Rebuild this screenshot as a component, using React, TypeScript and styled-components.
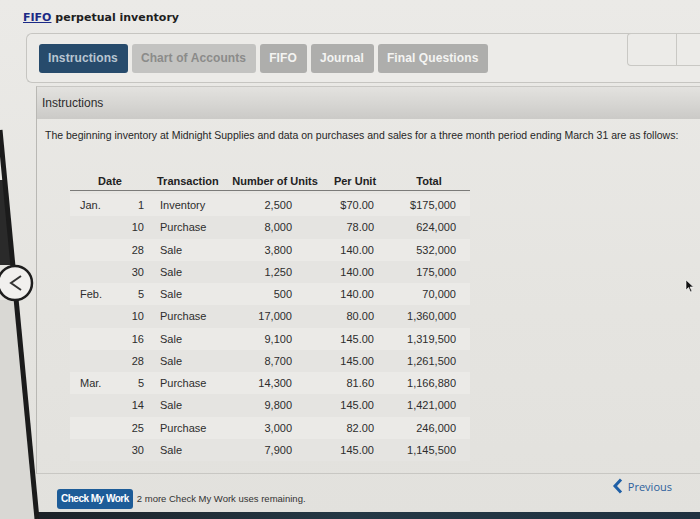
import React from "react";
import styled, { createGlobalStyle } from "styled-components";

const GlobalStyle = createGlobalStyle`
  html, body {
    margin: 0;
    padding: 0;
    background: #e6e5e1;
  }
  body {
    font-family: "Liberation Sans", Arial, sans-serif;
    color: #2a2a2a;
  }
`;

interface Row {
  month?: string;
  day: string;
  kind: string;
  units: string;
  per: string;
  total: string;
}

const rows: Row[] = [
  { month: "Jan.", day: "1", kind: "Inventory", units: "2,500", per: "$70.00", total: "$175,000" },
  { day: "10", kind: "Purchase", units: "8,000", per: "78.00", total: "624,000" },
  { day: "28", kind: "Sale", units: "3,800", per: "140.00", total: "532,000" },
  { day: "30", kind: "Sale", units: "1,250", per: "140.00", total: "175,000" },
  { month: "Feb.", day: "5", kind: "Sale", units: "500", per: "140.00", total: "70,000" },
  { day: "10", kind: "Purchase", units: "17,000", per: "80.00", total: "1,360,000" },
  { day: "16", kind: "Sale", units: "9,100", per: "145.00", total: "1,319,500" },
  { day: "28", kind: "Sale", units: "8,700", per: "145.00", total: "1,261,500" },
  { month: "Mar.", day: "5", kind: "Purchase", units: "14,300", per: "81.60", total: "1,166,880" },
  { day: "14", kind: "Sale", units: "9,800", per: "145.00", total: "1,421,000" },
  { day: "25", kind: "Purchase", units: "3,000", per: "82.00", total: "246,000" },
  { day: "30", kind: "Sale", units: "7,900", per: "145.00", total: "1,145,500" },
];

const tabs = ["Instructions", "Chart of Accounts", "FIFO", "Journal", "Final Questions"];

const Screen = styled.div`
  position: relative;
  width: 700px;
  height: 519px;
  overflow: hidden;
  display: flex;
  flex-direction: column;
  background: linear-gradient(180deg, #ebeae7 0%, #e5e4e0 60%, #e2e1dd 100%);
`;

const Title = styled.h1`
  margin: 0;
  padding: 10px 0 0 23px;
  height: 22px;
  font-family: "DejaVu Sans", Verdana, sans-serif;
  font-size: 11px;
  font-weight: bold;
  color: #1e1e1e;
  line-height: 16px;
`;

const TitleLink = styled.span`
  color: #1b2a86;
  text-decoration: underline;
`;

const TabBar = styled.div`
  margin: 1px 0 0 26px;
  height: 48px;
  display: flex;
  align-items: center;
  gap: 4px;
  padding-left: 12px;
  border: 1px solid #c6c5c1;
  border-right: none;
  border-radius: 6px 0 0 6px;
  background: #ecebe8;
`;

const Tab = styled.div<{ $active?: boolean; $muted?: boolean }>`
  height: 29px;
  display: flex;
  align-items: center;
  padding: 0 10px 0 9px;
  border-radius: 3px;
  font-size: 12px;
  font-weight: bold;
  letter-spacing: 0.1px;
  background: ${(p) => (p.$active ? "#274b6c" : p.$muted ? "#c3c3c1" : "#aeaeac")};
  color: ${(p) => (p.$active ? "#b9c6d2" : p.$muted ? "#8b8b8a" : "#f4f4f2")};
`;

const SideBox = styled.div`
  margin-left: auto;
  align-self: flex-start;
  margin-top: -1px;
  width: 72px;
  height: 31px;
  display: flex;
  border: 1px solid #c9c8c4;
  border-right: none;
  border-radius: 4px 0 0 4px;
`;

const SideCell = styled.div`
  width: 48px;
  border-right: 1px solid #c9c8c4;
`;

const Panel = styled.section`
  margin: 3px 0 0 36px;
  height: 386px;
  display: flex;
  flex-direction: column;
  border-left: 1px solid #b9b8b4;
  border-top: 1px solid #c8c7c3;
  border-bottom: 1px solid #c8c7c3;
`;

const PanelHead = styled.div`
  height: 32px;
  display: flex;
  align-items: center;
  padding-left: 5px;
  font-size: 12px;
  color: #2c2c2c;
  background: linear-gradient(180deg, #e3e2df 0%, #d6d5d2 55%, #cbcac7 100%);
`;

const Intro = styled.p`
  margin: 9px 0 0 8px;
  font-size: 10.5px;
  line-height: 14px;
  color: #262626;
  white-space: nowrap;
`;

const Table = styled.div`
  margin: 31px 0 0 33px;
  width: 400px;
  display: flex;
  flex-direction: column;
  font-size: 11px;
`;

const HeadRow = styled.div`
  height: 16px;
  display: grid;
  grid-template-columns: 80px 78px 94px 66px 82px;
  align-items: center;
  font-weight: bold;
  color: #222;
  border-bottom: 1px solid #7b7b79;
  padding-bottom: 1px;
  margin-bottom: 3px;
`;

const HeadCell = styled.div<{ $align?: "left" | "center" | "right" }>`
  text-align: ${(p) => p.$align ?? "center"};
  padding-left: ${(p) => (p.$align === "left" ? "7px" : "0")};
`;

const BodyRow = styled.div<{ $shade: boolean }>`
  height: 22.25px;
  display: grid;
  grid-template-columns: 55px 25px 78px 72px 80px 84px;
  align-items: center;
  color: #2d2d2d;
  background: ${(p) => (p.$shade ? "#e5e4e1" : "#ebeae7")};
`;

const Cell = styled.div<{ $align?: "left" | "right"; $pad?: number }>`
  text-align: ${(p) => p.$align ?? "left"};
  padding-left: ${(p) => (p.$align === "right" ? 0 : p.$pad ?? 0)}px;
  padding-right: ${(p) => (p.$align === "right" ? p.$pad ?? 0 : 0)}px;
`;

const Footer = styled.div`
  flex: 1;
  display: flex;
  align-items: center;
  padding: 0 28px 0 57px;
`;

const CheckButton = styled.button`
  height: 20px;
  padding: 0 4px;
  border: none;
  border-radius: 3px;
  background: #1d5c98;
  color: #fff;
  font-family: "Liberation Sans", Arial, sans-serif;
  font-size: 10px;
  font-weight: bold;
  letter-spacing: -0.5px;
  margin-top: 11px;
`;

const Remaining = styled.span`
  margin: 11px 0 0 4px;
  font-size: 9.5px;
  color: #333;
`;

const Previous = styled.div`
  margin-left: auto;
  margin-bottom: 14px;
  display: flex;
  align-items: center;
  gap: 5px;
  font-family: "Open Sans", sans-serif;
  font-size: 11px;
  color: #2d5f9c;
`;

const BottomEdge = styled.div`
  height: 7px;
  background: linear-gradient(90deg, #1b1f24 0%, #243845 50%, #1f3140 100%);
`;

const Bezel = styled.svg`
  position: absolute;
  left: 0;
  top: 0;
  pointer-events: none;
`;

const Cursor = styled.svg`
  position: absolute;
  left: 685px;
  top: 279px;
`;

export default function App() {
  return (
    <Screen>
      <GlobalStyle />
      <Title>
        <TitleLink>FIFO</TitleLink> perpetual inventory
      </Title>
      <TabBar>
        {tabs.map((t, i) => (
          <Tab key={t} $active={i === 0} $muted={i === 1}>
            {t}
          </Tab>
        ))}
        <SideBox>
          <SideCell />
        </SideBox>
      </TabBar>
      <Panel>
        <PanelHead>Instructions</PanelHead>
        <Intro>
          The beginning inventory at Midnight Supplies and data on purchases and sales for a three month
          period ending March 31 are as follows:
        </Intro>
        <Table>
          <HeadRow>
            <HeadCell>Date</HeadCell>
            <HeadCell $align="left">Transaction</HeadCell>
            <HeadCell>Number of Units</HeadCell>
            <HeadCell>Per Unit</HeadCell>
            <HeadCell>Total</HeadCell>
          </HeadRow>
          {rows.map((r, i) => (
            <BodyRow key={i} $shade={i % 2 === 1}>
              <Cell $pad={10}>{r.month ?? ""}</Cell>
              <Cell $align="right" $pad={6}>{r.day}</Cell>
              <Cell $pad={10}>{r.kind}</Cell>
              <Cell $align="right" $pad={8}>{r.units}</Cell>
              <Cell $align="right" $pad={6}>{r.per}</Cell>
              <Cell $align="right" $pad={8}>{r.total}</Cell>
            </BodyRow>
          ))}
        </Table>
      </Panel>
      <Footer>
        <CheckButton>Check My Work</CheckButton>
        <Remaining>2 more Check My Work uses remaining.</Remaining>
        <Previous>
          <svg width="11" height="16" viewBox="0 0 11 16">
            <path d="M9 1.5 L3 8 L9 14.5" fill="none" stroke="#1f5fa6" strokeWidth="3" />
          </svg>
          Previous
        </Previous>
      </Footer>
      <BottomEdge />
      <Bezel width="50" height="519" viewBox="0 0 50 519">
        <path d="M0 300 L14 300 L38 519 L0 519 Z" fill="#d9d8d4" />
        <path d="M0 180 L4 180 L13 265 L0 265 Z" fill="#2a2a2a" />
        <path d="M0 130 L37 519" stroke="#1b1b1b" strokeWidth="5" />
        <circle cx="15" cy="283" r="17" fill="#f1f0ee" stroke="#1e1e1e" strokeWidth="2.5" />
        <path d="M21 276 L11 283 L21 290" fill="none" stroke="#333" strokeWidth="2" />
      </Bezel>
      <Cursor width="10" height="14" viewBox="0 0 10 14">
        <path d="M1 1 L1 11 L3.5 8.5 L5.5 13 L7 12.3 L5 8 L8.5 8 Z" fill="#111" stroke="#fff" strokeWidth="0.6" />
      </Cursor>
    </Screen>
  );
}
